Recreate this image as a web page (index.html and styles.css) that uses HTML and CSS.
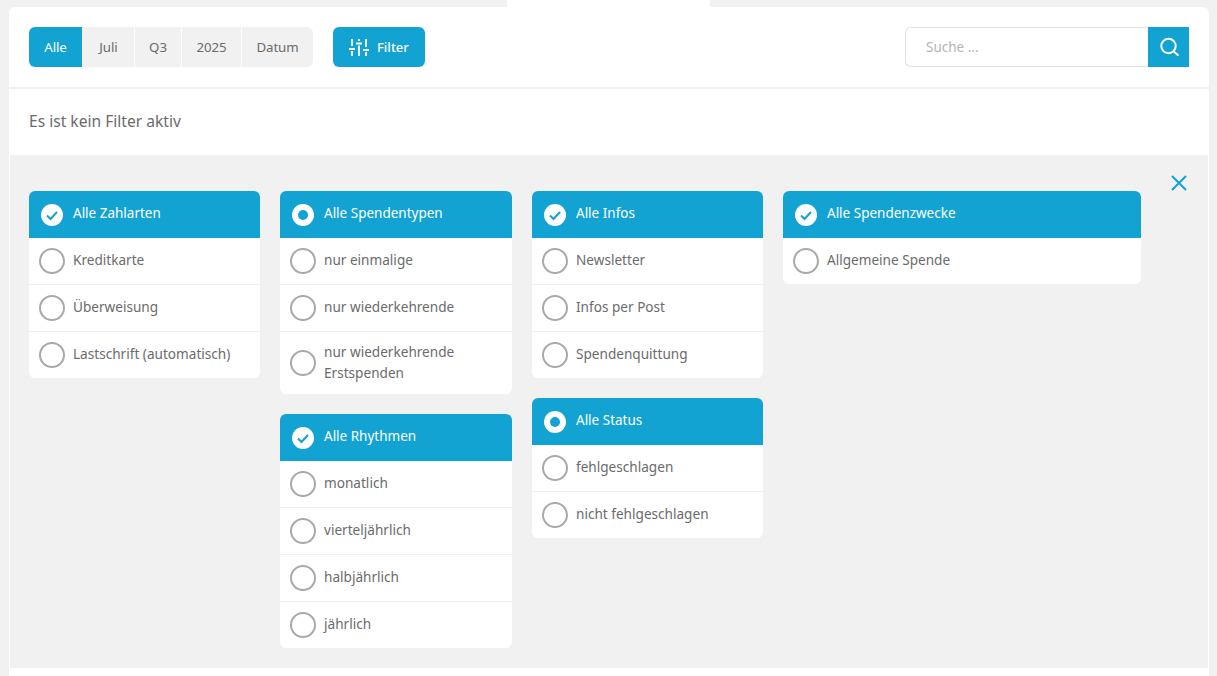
FILE: index.html
```html
<!DOCTYPE html>
<html lang="de">
<head>
<meta charset="utf-8">
<title>Spenden</title>
<link rel="stylesheet" href="styles.css">
</head>
<body>
<div class="tab"></div>
<main class="card">
  <header class="toolbar">
    <nav class="seg">
      <a class="seg-item active">Alle</a>
      <a class="seg-item w-juli">Juli</a>
      <a class="seg-item w-q3">Q3</a>
      <a class="seg-item w-year">2025</a>
      <a class="seg-item w-datum">Datum</a>
    </nav>
    <button class="filter-btn">
      <svg class="sliders" viewBox="0 0 22 18" width="22" height="18"><g fill="none" stroke="#fff" stroke-width="1.8"><path d="M4 1v7M1 11h6M4 13v5"/><path d="M11 1v2M8 5.500h6M11 7.500v10.500"/><path d="M18 1v8M15 12h6M18 14v4"/></g></svg>
      <span>Filter</span>
    </button>
    <div class="search">
      <div class="search-input">Suche ...</div>
      <button class="search-btn">
        <svg viewBox="0 0 20 20" width="20" height="20"><circle cx="9.500" cy="9" r="7.200" fill="none" stroke="#fff" stroke-width="2"/><path d="M14.800 14.500l4 3.500" fill="none" stroke="#fff" stroke-width="2" stroke-linecap="round"/></svg>
      </button>
    </div>
  </header>
  <div class="status">Es ist kein Filter aktiv</div>
  <section class="panel">
    <button class="close"><svg viewBox="0 0 16 16" width="16" height="16"><path d="M1 1l14 14M15 1L1 15" stroke="#12a3d2" stroke-width="2" fill="none"/></svg></button>
    <div class="cols">
      <div class="col">
        <div class="group">
          <div class="head"><span class="mark"><svg viewBox="0 0 22 22" width="22" height="22"><path d="M6 11.500l3.500 3.500 6.500-7" fill="none" stroke="#12a3d2" stroke-width="2"/></svg></span><span class="label">Alle Zahlarten</span></div>
          <div class="row"><i class="radio"></i><span class="label">Kreditkarte</span></div>
          <div class="row"><i class="radio"></i><span class="label">Überweisung</span></div>
          <div class="row"><i class="radio"></i><span class="label">Lastschrift (automatisch)</span></div>
        </div>
      </div>
      <div class="col">
        <div class="group">
          <div class="head"><span class="mark"><i class="dot"></i></span><span class="label">Alle Spendentypen</span></div>
          <div class="row"><i class="radio"></i><span class="label">nur einmalige</span></div>
          <div class="row"><i class="radio"></i><span class="label">nur wiederkehrende</span></div>
          <div class="row tall"><i class="radio"></i><span class="label">nur wiederkehrende<br>Erstspenden</span></div>
        </div>
        <div class="group">
          <div class="head"><span class="mark"><svg viewBox="0 0 22 22" width="22" height="22"><path d="M6 11.500l3.500 3.500 6.500-7" fill="none" stroke="#12a3d2" stroke-width="2"/></svg></span><span class="label">Alle Rhythmen</span></div>
          <div class="row"><i class="radio"></i><span class="label">monatlich</span></div>
          <div class="row"><i class="radio"></i><span class="label">vierteljährlich</span></div>
          <div class="row"><i class="radio"></i><span class="label">halbjährlich</span></div>
          <div class="row"><i class="radio"></i><span class="label">jährlich</span></div>
        </div>
      </div>
      <div class="col">
        <div class="group">
          <div class="head"><span class="mark"><svg viewBox="0 0 22 22" width="22" height="22"><path d="M6 11.500l3.500 3.500 6.500-7" fill="none" stroke="#12a3d2" stroke-width="2"/></svg></span><span class="label">Alle Infos</span></div>
          <div class="row"><i class="radio"></i><span class="label">Newsletter</span></div>
          <div class="row"><i class="radio"></i><span class="label">Infos per Post</span></div>
          <div class="row"><i class="radio"></i><span class="label">Spendenquittung</span></div>
        </div>
        <div class="group">
          <div class="head"><span class="mark"><i class="dot"></i></span><span class="label">Alle Status</span></div>
          <div class="row"><i class="radio"></i><span class="label">fehlgeschlagen</span></div>
          <div class="row"><i class="radio"></i><span class="label">nicht fehlgeschlagen</span></div>
        </div>
      </div>
      <div class="col">
        <div class="group">
          <div class="head"><span class="mark"><svg viewBox="0 0 22 22" width="22" height="22"><path d="M6 11.500l3.500 3.500 6.500-7" fill="none" stroke="#12a3d2" stroke-width="2"/></svg></span><span class="label">Alle Spendenzwecke</span></div>
          <div class="row"><i class="radio"></i><span class="label">Allgemeine Spende</span></div>
        </div>
      </div>
    </div>
  </section>
</main>
</body>
</html>
```
FILE: styles.css
```css
* { box-sizing: border-box; }
html, body { height: 100%; }
body {
  margin: 0;
  background: #f1f1f1;
  font-family: "Noto Sans", "Open Sans", sans-serif;
  font-size: 14px;
  color: #6b6b6b;
  overflow: hidden;
}
.tab { height: 7px; width: 203px; margin-left: 507px; background: #fff; }
.card {
  margin: 0 8px 0 9px;
  background: #fff;
  border-radius: 6px 6px 0 0;
  height: 669px;
}
.toolbar {
  display: flex;
  align-items: center;
  height: 82px;
  padding: 20px;
  border-bottom: 2px solid #f1f1f1;
}
.seg {
  display: flex;
  gap: 1px;
  height: 40px;
  border-radius: 6px;
  overflow: hidden;
}
.seg-item {
  display: flex;
  align-items: center;
  justify-content: center;
  width: 51px;
  padding-bottom: 1px;
  background: #f1f1f1;
  font-size: 13.3px;
  letter-spacing: -.1px;
}
.seg-item.active { width: 53px; background: #12a3d2; color: #fff; }
.seg-item.w-q3 { width: 46px; }
.seg-item.w-year { width: 59px; }
.seg-item.w-datum { width: 71px; }
.filter-btn {
  display: flex;
  align-items: center;
  gap: 7px;
  height: 40px;
  margin-left: 20px;
  padding: 0 0 0 15px;
  width: 92px;
  border: 0;
  border-radius: 6px;
  background: #12a3d2;
  color: #fff;
  font: inherit;
  font-size: 13px;
  font-weight: 500;
}
.filter-btn span { padding-bottom: 1px; }
.search { display: flex; margin-left: auto; height: 40px; width: 284px; }
.search-input {
  flex: 1;
  display: flex;
  align-items: center;
  padding: 0 0 1px 20px;
  border: 1px solid #e2e2e6;
  border-right: 0;
  border-radius: 6px 0 0 6px;
  color: #b5b5b5;
  font-size: 13.5px;
}
.search-btn {
  display: flex;
  align-items: center;
  justify-content: center;
  width: 41px;
  padding: 0;
  border: 0;
  background: #12a3d2;
}
.status {
  display: flex;
  align-items: center;
  height: 66px;
  padding: 0 0 2px 20px;
  font-size: 15.600px;
}
.panel {
  position: relative;
  margin: 0 1px;
  height: 513px;
  padding: 36px 19px 0;
  background: #f1f1f1;
}
.close {
  position: absolute;
  top: 20px;
  right: 21px;
  width: 16px;
  height: 16px;
  padding: 0;
  border: 0;
  background: none;
}
.close svg { display: block; }
.cols {
  display: grid;
  grid-template-columns: 231px 232px 231px 358px;
  column-gap: 20px;
}
.col { display: flex; flex-direction: column; gap: 20px; }
.group { background: #fff; border-radius: 6px; overflow: hidden; }
.head {
  display: flex;
  align-items: center;
  height: 47px;
  padding-left: 12px;
  background: #12a3d2;
  color: #fff;
  font-size: 13.5px;
}
.head .label { padding-bottom: 3px; }
.mark {
  display: flex;
  align-items: center;
  justify-content: center;
  width: 22px;
  height: 22px;
  margin-right: 10px;
  border-radius: 50%;
  background: #fff;
}
.mark svg { display: block; }
.dot { width: 10px; height: 10px; border-radius: 50%; background: #12a3d2; }
.row {
  display: flex;
  align-items: center;
  height: 47px;
  padding-left: 10px;
  border-bottom: 1px solid #f1f1f1;
  font-size: 13.6px;
  line-height: 21px;
}
.row .label { padding-bottom: 3px; }
.row:last-child { height: 46px; border-bottom: 0; }
.row.tall { height: 62px; }
.radio {
  flex: none;
  width: 26px;
  height: 26px;
  margin-right: 8px;
  border: 2px solid #a9a9a9;
  border-radius: 50%;
}
```
